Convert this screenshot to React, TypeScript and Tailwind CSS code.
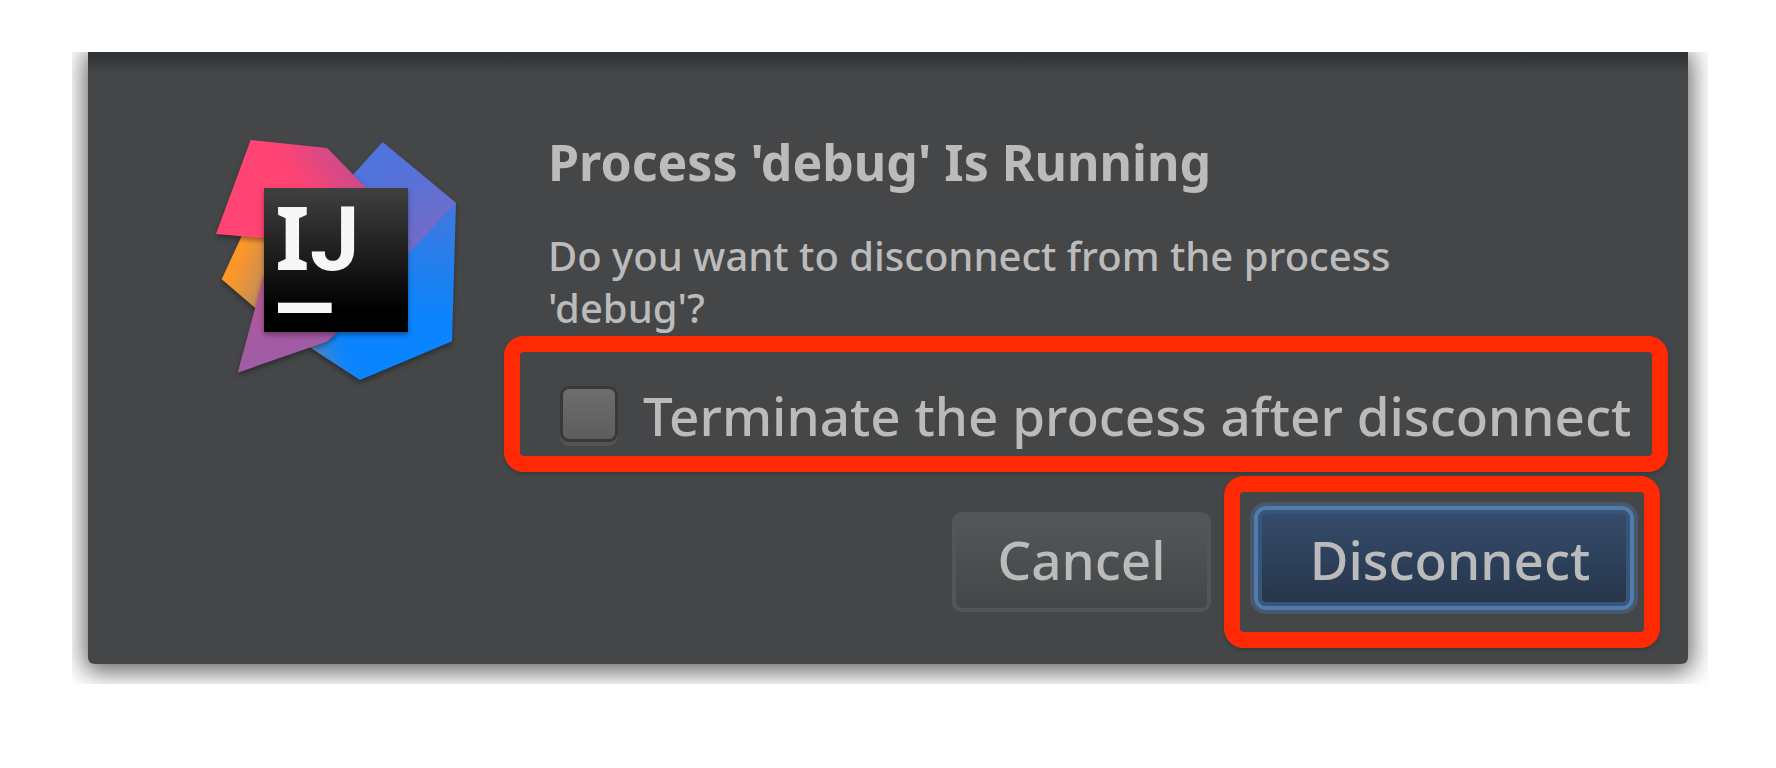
import type { ReactNode } from "react";

function IdeaLogo() {
  return (
    <svg viewBox="0 0 900 870" className="h-[290px] w-[300px] shrink-0" role="img" aria-label="IntelliJ IDEA">
      <defs>
        <linearGradient id="pink" gradientUnits="userSpaceOnUse" x1="290" y1="250" x2="470" y2="130">
          <stop offset="0.2" stopColor="#ff4372" />
          <stop offset="1" stopColor="#c94c8d" />
        </linearGradient>
        <linearGradient id="orange" gradientUnits="userSpaceOnUse" x1="110" y1="470" x2="250" y2="530">
          <stop offset="0.15" stopColor="#fd9728" />
          <stop offset="1" stopColor="#b58a66" />
        </linearGradient>
        <linearGradient id="violet" gradientUnits="userSpaceOnUse" x1="230" y1="500" x2="260" y2="760">
          <stop offset="0" stopColor="#b8568f" />
          <stop offset="0.8" stopColor="#a25ba5" />
        </linearGradient>
        <linearGradient id="indigo" gradientUnits="userSpaceOnUse" x1="570" y1="110" x2="700" y2="400">
          <stop offset="0.2" stopColor="#5073dc" />
          <stop offset="1" stopColor="#746bc6" />
        </linearGradient>
        <linearGradient id="blue" gradientUnits="userSpaceOnUse" x1="790" y1="280" x2="700" y2="700">
          <stop offset="0" stopColor="#4477df" />
          <stop offset="0.5" stopColor="#1f80ee" />
          <stop offset="0.85" stopColor="#0a84ff" />
        </linearGradient>
        <linearGradient id="steel" gradientUnits="userSpaceOnUse" x1="375" y1="730" x2="490" y2="700">
          <stop offset="0" stopColor="#5486b8" />
          <stop offset="1" stopColor="#0a84ff" stopOpacity="0" />
        </linearGradient>
        <linearGradient id="tile" x1="0" y1="0" x2="0" y2="1">
          <stop offset="0" stopColor="#404040" />
          <stop offset="0.85" stopColor="#000000" />
        </linearGradient>
        <filter id="shade" x="-10%" y="-10%" width="120%" height="125%" colorInterpolationFilters="sRGB">
          <feDropShadow dx="0" dy="9" stdDeviation="8" floodColor="#000000" floodOpacity="0.35" />
        </filter>
      </defs>
      <g filter="url(#shade)">
        <polygon points="155,378 95,508 200,598 300,560 300,378" fill="url(#orange)" />
        <polygon points="798,278 786,694 510,810 362,713 400,500 640,400" fill="url(#blue)" />
        <polygon points="510,810 362,713 400,600 560,600" fill="url(#steel)" />
        <polygon points="578,96 798,278 630,456 480,400 488,195" fill="url(#indigo)" />
      </g>
      <g filter="url(#shade)">
        <polygon points="222,495 143,788 410,695 440,670 300,500" fill="url(#violet)" />
        <polygon points="182,90 412,114 560,266 400,400 78,372" fill="url(#pink)" />
      </g>
      <rect x="222" y="234" width="432" height="432" fill="url(#tile)" filter="url(#shade)" />
      <g fill="#f7f7f7" fontWeight="700">
        <text x="256" y="479" fontSize="264" fontFamily="'Noto Sans', sans-serif">I</text>
        <text x="360" y="479" fontSize="266" fontFamily="Roboto, sans-serif">J</text>
      </g>
      <rect x="264" y="578" width="161" height="31" fill="#f7f7f7" />
    </svg>
  );
}

function Highlight({ className, children }: { className: string; children: ReactNode }) {
  return (
    <div className={`rounded-[20px] border-[16px] border-[#ff2a04] shadow-[0_2px_4px_rgba(0,0,0,0.2)] ${className}`}>
      {children}
    </div>
  );
}

export default function App() {
  return (
    <main className="px-[88px] pt-[52px] pb-[104px] font-['Noto_Sans',sans-serif] text-[#bbbbbb]">
      <section
        role="dialog"
        aria-labelledby="dialog-title"
        className="flex items-start gap-[14px] rounded-b-[6px] bg-[linear-gradient(to_bottom,#303335_0px,#35383a_8px,#434546_20px,#454648_24px)] pr-5 pb-4 pl-[102px] shadow-[0_4px_24px_4px_rgba(0,0,0,0.6)] [clip-path:inset(0_-20px_-20px_-16px)]"
      >
        <div className="pt-[58px]">
          <IdeaLogo />
        </div>
        <div className="min-w-0 flex-1 pt-[78px]">
          <div className="pl-[44px]">
            <h1 id="dialog-title" className="text-[50px] leading-[64px] font-bold">
              Process 'debug' Is Running
            </h1>
            <p className="mt-9 max-w-[900px] text-[40px] leading-[52px] font-medium">
              Do you want to disconnect from the process 'debug'?
            </p>
          </div>
          <Highlight className="mt-[2px] flex h-[136px] items-center pt-6 pl-[40px]">
            <label className="flex items-center gap-[25px] text-[53px] leading-[64px] font-medium whitespace-nowrap">
              <input
                type="checkbox"
                className="mb-1 h-[56px] w-[58px] shrink-0 appearance-none rounded-[9px] border-[3px] border-[#37393a] bg-linear-to-b from-[#6d6d6d] to-[#5d5d5d] shadow-[0_4px_0_#525456]"
              />
              Terminate the process after disconnect
            </label>
          </Highlight>
          <div className="mt-1 flex items-center justify-end gap-[13px] pr-2">
            <button
              type="button"
              className="h-[100px] w-[259px] rounded-[10px] border-4 border-[#535557] bg-linear-to-b from-[#535759] to-[#434748] pb-1 text-[53px] leading-[64px] font-medium"
            >
              Cancel
            </button>
            <Highlight className="h-[172px] pt-[14px] pr-[10px] pl-[14px]">
              <button
                type="button"
                className="h-[104px] w-[380px] rounded-[12px] border-4 border-[#507cab] bg-linear-to-b from-[#364d6c] to-[#26354a] pt-1 pl-3 text-[53px] leading-[64px] font-medium shadow-[0_0_0_4px_#47586c,inset_0_0_0_4px_#37547a]"
              >
                Disconnect
              </button>
            </Highlight>
          </div>
        </div>
      </section>
    </main>
  );
}
